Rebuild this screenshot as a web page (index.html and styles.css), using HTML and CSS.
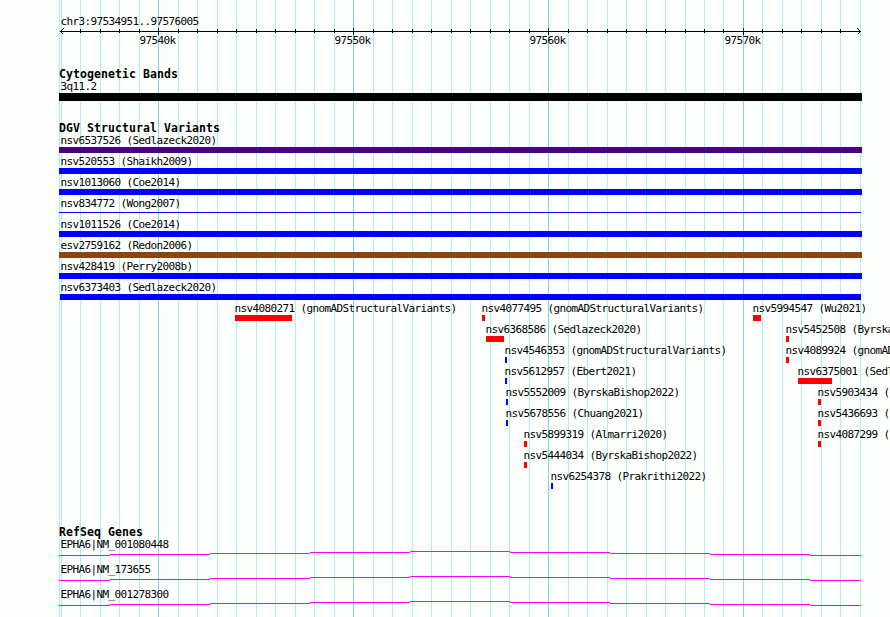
FILE: index.html
```html
<!DOCTYPE html>
<html lang="en">
<head>
<meta charset="utf-8">
<title>chr3:97534951..97576005</title>
<link rel="stylesheet" href="styles.css">
</head>
<body>
<main class="browser">
<svg class="gridlines" width="890" height="617" aria-hidden="true">
<path class="minor" d="M59.5 0V617M61.5 0V617M80.5 0V617M100.5 0V617M119.5 0V617M139.5 0V617M178.5 0V617M197.5 0V617M217.5 0V617M236.5 0V617M256.5 0V617M275.5 0V617M295.5 0V617M314.5 0V617M334.5 0V617M373.5 0V617M392.5 0V617M412.5 0V617M431.5 0V617M451.5 0V617M470.5 0V617M490.5 0V617M509.5 0V617M529.5 0V617M568.5 0V617M587.5 0V617M607.5 0V617M626.5 0V617M646.5 0V617M665.5 0V617M685.5 0V617M704.5 0V617M723.5 0V617M762.5 0V617M782.5 0V617M801.5 0V617M821.5 0V617M840.5 0V617M860.5 0V617"/>
<path class="major" d="M158.5 0V617M353.5 0V617M548.5 0V617M743.5 0V617"/>
</svg>
<header class="ruler">
<p class="label range">chr3:97534951..97576005</p>
<svg class="axis" width="890" height="7" aria-hidden="true">
<path d="M60 3.5H861M63.5 .5L60.5 3.5L63.5 6.5M857.5 .5L860.5 3.5L857.5 6.5M158.5 0V7M353.5 0V7M548.5 0V7M743.5 0V7M80.5 1V5M100.5 1V5M119.5 1V5M139.5 1V5M178.5 1V5M197.5 1V5M217.5 1V5M236.5 1V5M256.5 1V5M275.5 1V5M295.5 1V5M314.5 1V5M334.5 1V5M373.5 1V5M392.5 1V5M412.5 1V5M431.5 1V5M451.5 1V5M470.5 1V5M490.5 1V5M509.5 1V5M529.5 1V5M568.5 1V5M587.5 1V5M607.5 1V5M626.5 1V5M646.5 1V5M665.5 1V5M685.5 1V5M704.5 1V5M723.5 1V5M762.5 1V5M782.5 1V5M801.5 1V5M821.5 1V5M840.5 1V5"/>
</svg>
<div class="scale label"><span>97540k</span><span>97550k</span><span>97560k</span><span>97570k</span></div>
</header>
<section class="track cytobands">
<h2>Cytogenetic Bands</h2>
<div class="span"><p class="label">3q11.2</p><div class="bar band"></div></div>
</section>
<section class="track variants">
<h2>DGV Structural Variants</h2>
<div class="span"><p class="label">nsv6537526 (Sedlazeck2020)</p><div class="bar complex"></div></div>
<div class="span"><p class="label">nsv520553 (Shaikh2009)</p><div class="bar gain"></div></div>
<div class="span"><p class="label">nsv1013060 (Coe2014)</p><div class="bar gain"></div></div>
<div class="span"><p class="label">nsv834772 (Wong2007)</p><div class="bar gain thin"></div></div>
<div class="span"><p class="label">nsv1011526 (Coe2014)</p><div class="bar gain"></div></div>
<div class="span"><p class="label">esv2759162 (Redon2006)</p><div class="bar mixed"></div></div>
<div class="span"><p class="label">nsv428419 (Perry2008b)</p><div class="bar gain"></div></div>
<div class="span"><p class="label">nsv6373403 (Sedlazeck2020)</p><div class="bar gain inset"></div></div>
<div class="row">
<div class="feature" style="--x:235px;--w:57px"><p class="label">nsv4080271 (gnomADStructuralVariants)</p><div class="bar loss"></div></div>
<div class="feature" style="--x:482px;--w:3px"><p class="label">nsv4077495 (gnomADStructuralVariants)</p><div class="bar loss"></div></div>
<div class="feature" style="--x:753px;--w:8px"><p class="label">nsv5994547 (Wu2021)</p><div class="bar loss"></div></div>
</div>
<div class="row">
<div class="feature" style="--x:486px;--w:18px"><p class="label">nsv6368586 (Sedlazeck2020)</p><div class="bar loss"></div></div>
<div class="feature" style="--x:786px;--w:3px"><p class="label">nsv5452508 (ByrskaBishop2022)</p><div class="bar loss"></div></div>
</div>
<div class="row">
<div class="feature" style="--x:505px;--w:2px"><p class="label">nsv4546353 (gnomADStructuralVariants)</p><div class="bar gain"></div></div>
<div class="feature" style="--x:786px;--w:3px"><p class="label">nsv4089924 (gnomADStructuralVariants)</p><div class="bar loss"></div></div>
</div>
<div class="row">
<div class="feature" style="--x:505px;--w:2px"><p class="label">nsv5612957 (Ebert2021)</p><div class="bar gain"></div></div>
<div class="feature" style="--x:798px;--w:34px"><p class="label">nsv6375001 (Sedlazeck2020)</p><div class="bar loss"></div></div>
</div>
<div class="row">
<div class="feature" style="--x:506px;--w:2px"><p class="label">nsv5552009 (ByrskaBishop2022)</p><div class="bar gain"></div></div>
<div class="feature" style="--x:818px;--w:3px"><p class="label">nsv5903434 (</p><div class="bar loss"></div></div>
</div>
<div class="row">
<div class="feature" style="--x:506px;--w:2px"><p class="label">nsv5678556 (Chuang2021)</p><div class="bar gain"></div></div>
<div class="feature" style="--x:818px;--w:3px"><p class="label">nsv5436693 (</p><div class="bar loss"></div></div>
</div>
<div class="row">
<div class="feature" style="--x:524px;--w:3px"><p class="label">nsv5899319 (Almarri2020)</p><div class="bar loss"></div></div>
<div class="feature" style="--x:818px;--w:3px"><p class="label">nsv4087299 (</p><div class="bar loss"></div></div>
</div>
<div class="row">
<div class="feature" style="--x:524px;--w:3px"><p class="label">nsv5444034 (ByrskaBishop2022)</p><div class="bar loss"></div></div>
</div>
<div class="row">
<div class="feature" style="--x:551px;--w:2px"><p class="label">nsv6254378 (Prakrithi2022)</p><div class="bar gain"></div></div>
</div>
</section>
<section class="track genes">
<h2>RefSeq Genes</h2>
<div class="gene"><p class="label">EPHA6|NM_001080448</p><svg class="intron" width="802" height="5" aria-hidden="true"><path d="M0 4.5H51M51 3.5H151M151 2.5H251M251 1.5H351M351 .5H451M451 1.5H551M551 2.5H651M651 3.5H751M751 4.5H802"/></svg></div>
<div class="gene"><p class="label">EPHA6|NM_173655</p><svg class="intron" width="802" height="5" aria-hidden="true"><path d="M0 4.5H51M51 3.5H151M151 2.5H251M251 1.5H351M351 .5H451M451 1.5H551M551 2.5H651M651 3.5H751M751 4.5H802"/></svg></div>
<div class="gene"><p class="label">EPHA6|NM_001278300</p><svg class="intron" width="802" height="5" aria-hidden="true"><path d="M0 4.5H51M51 3.5H151M151 2.5H251M251 1.5H351M351 .5H451M451 1.5H551M551 2.5H651M651 3.5H751M751 4.5H802"/></svg></div>
</section>
</main>
</body>
</html>
```
FILE: styles.css
```css
* { box-sizing: border-box; }
body { margin: 0; background: #fdfffc; color: #000; }
h2, p { margin: 0; }
svg { display: block; }
.browser {
  position: relative;
  width: 890px;
  height: 617px;
  overflow: hidden;
  font-family: "DejaVu Sans Mono", "Liberation Mono", monospace;
}
.gridlines { position: absolute; inset: 0; z-index: -1; }
.gridlines path { fill: none; shape-rendering: crispEdges; }
.minor { stroke: #afeeee; }
.major { stroke: #87ceeb; }
.label {
  height: 12px;
  font-size: 11px;
  line-height: 14px;
  letter-spacing: -0.622px;
  white-space: pre;
}
.track .label { line-height: 12px; }
h2 {
  height: 13px;
  padding-left: 59px;
  font-size: 11.5px;
  font-weight: bold;
  line-height: 13px;
  letter-spacing: 0.077px;
  white-space: pre;
}
.ruler { height: 68px; padding-top: 15px; }
.range { height: 13px; padding-left: 60.4px; }
.axis path { stroke: #000; fill: none; shape-rendering: crispEdges; }
.scale {
  display: grid;
  grid-template-columns: repeat(4, 195px);
  margin: -1px 0 0 139.4px;
}
.cytobands { height: 54px; }
.variants { height: 404px; }
.span { height: 21px; padding-left: 59px; }
.span .label { padding-left: 1.4px; }
.span .bar { width: 803px; }
.cytobands .band { height: 8px; background: #000; }
.bar { height: 6px; }
.gain { background: #00f; }
.loss { background: #f00; }
.complex { background: #4b0082; }
.mixed { background: #8b4513; }
.span .inset { width: 801px; margin-left: 1px; }
.span .thin { height: 1px; width: 802px; margin-top: 2px; }
.row { display: grid; grid-template-columns: 890px; height: 21px; }
.feature { grid-area: 1 / 1; margin-left: var(--x); }
.feature .label { margin-left: -0.6px; }
.feature .bar { width: var(--w); }
.gene { height: 25px; padding-left: 59px; }
.gene .label { padding-left: 1.4px; }
.intron path { stroke: #f0f; fill: none; shape-rendering: crispEdges; }
```
